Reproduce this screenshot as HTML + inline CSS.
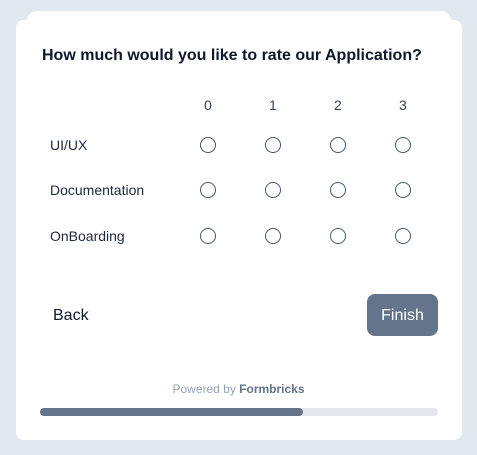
<!DOCTYPE html>
<html><head><style>
body{margin:0;width:477px;height:455px;background:#e2e8f0;font-family:"Liberation Sans",Arial,sans-serif;position:relative;overflow:hidden}
.back{position:absolute;left:27px;top:11px;width:424px;height:40px;background:#fff;border-radius:10px}
.card{position:absolute;left:16px;top:20px;width:446px;height:420px;background:#fff;border-radius:8px}
.t{position:absolute;white-space:nowrap}
.r{position:absolute;width:16px;height:16px;border:1px solid #475569;border-radius:50%;box-sizing:border-box}
</style></head><body>
<div class="back"></div>
<div class="card"></div>
<div class="t" style="left:42px;top:47px;font-size:16px;font-weight:bold;color:#0f172a">How much would you like to rate our Application?</div>
<div class="t" style="left:204px;top:97px;font-size:14px;color:#334155">0</div>
<div class="t" style="left:269px;top:97px;font-size:14px;color:#334155">1</div>
<div class="t" style="left:334px;top:97px;font-size:14px;color:#334155">2</div>
<div class="t" style="left:399px;top:97px;font-size:14px;color:#334155">3</div>
<div class="t" style="left:50px;top:137px;font-size:14px;color:#1e293b">UI/UX</div>
<div class="t" style="left:50px;top:182px;font-size:14px;color:#1e293b">Documentation</div>
<div class="t" style="left:50px;top:228px;font-size:14px;color:#1e293b">OnBoarding</div>
<div class="r" style="left:200px;top:137px"></div><div class="r" style="left:265px;top:137px"></div><div class="r" style="left:330px;top:137px"></div><div class="r" style="left:395px;top:137px"></div>
<div class="r" style="left:200px;top:182px"></div><div class="r" style="left:265px;top:182px"></div><div class="r" style="left:330px;top:182px"></div><div class="r" style="left:395px;top:182px"></div>
<div class="r" style="left:200px;top:228px"></div><div class="r" style="left:265px;top:228px"></div><div class="r" style="left:330px;top:228px"></div><div class="r" style="left:395px;top:228px"></div>
<div class="t" style="left:53px;top:307px;font-size:16px;color:#0f172a">Back</div>
<div style="position:absolute;left:367px;top:294px;width:71px;height:42px;background:#64748b;border-radius:8px;color:#fff;font-size:16px;line-height:44px;text-align:center">Finish</div>
<div class="t" style="left:0;width:477px;text-align:center;top:382px;font-size:12px;color:#94a3b8">Powered by <b style="color:#64748b">Formbricks</b></div>
<div style="position:absolute;left:40px;top:408px;width:398px;height:8px;background:#e5e7eb;border-radius:4px"></div>
<div style="position:absolute;left:40px;top:408px;width:263px;height:8px;background:#64748b;border-radius:4px"></div>
</body></html>
